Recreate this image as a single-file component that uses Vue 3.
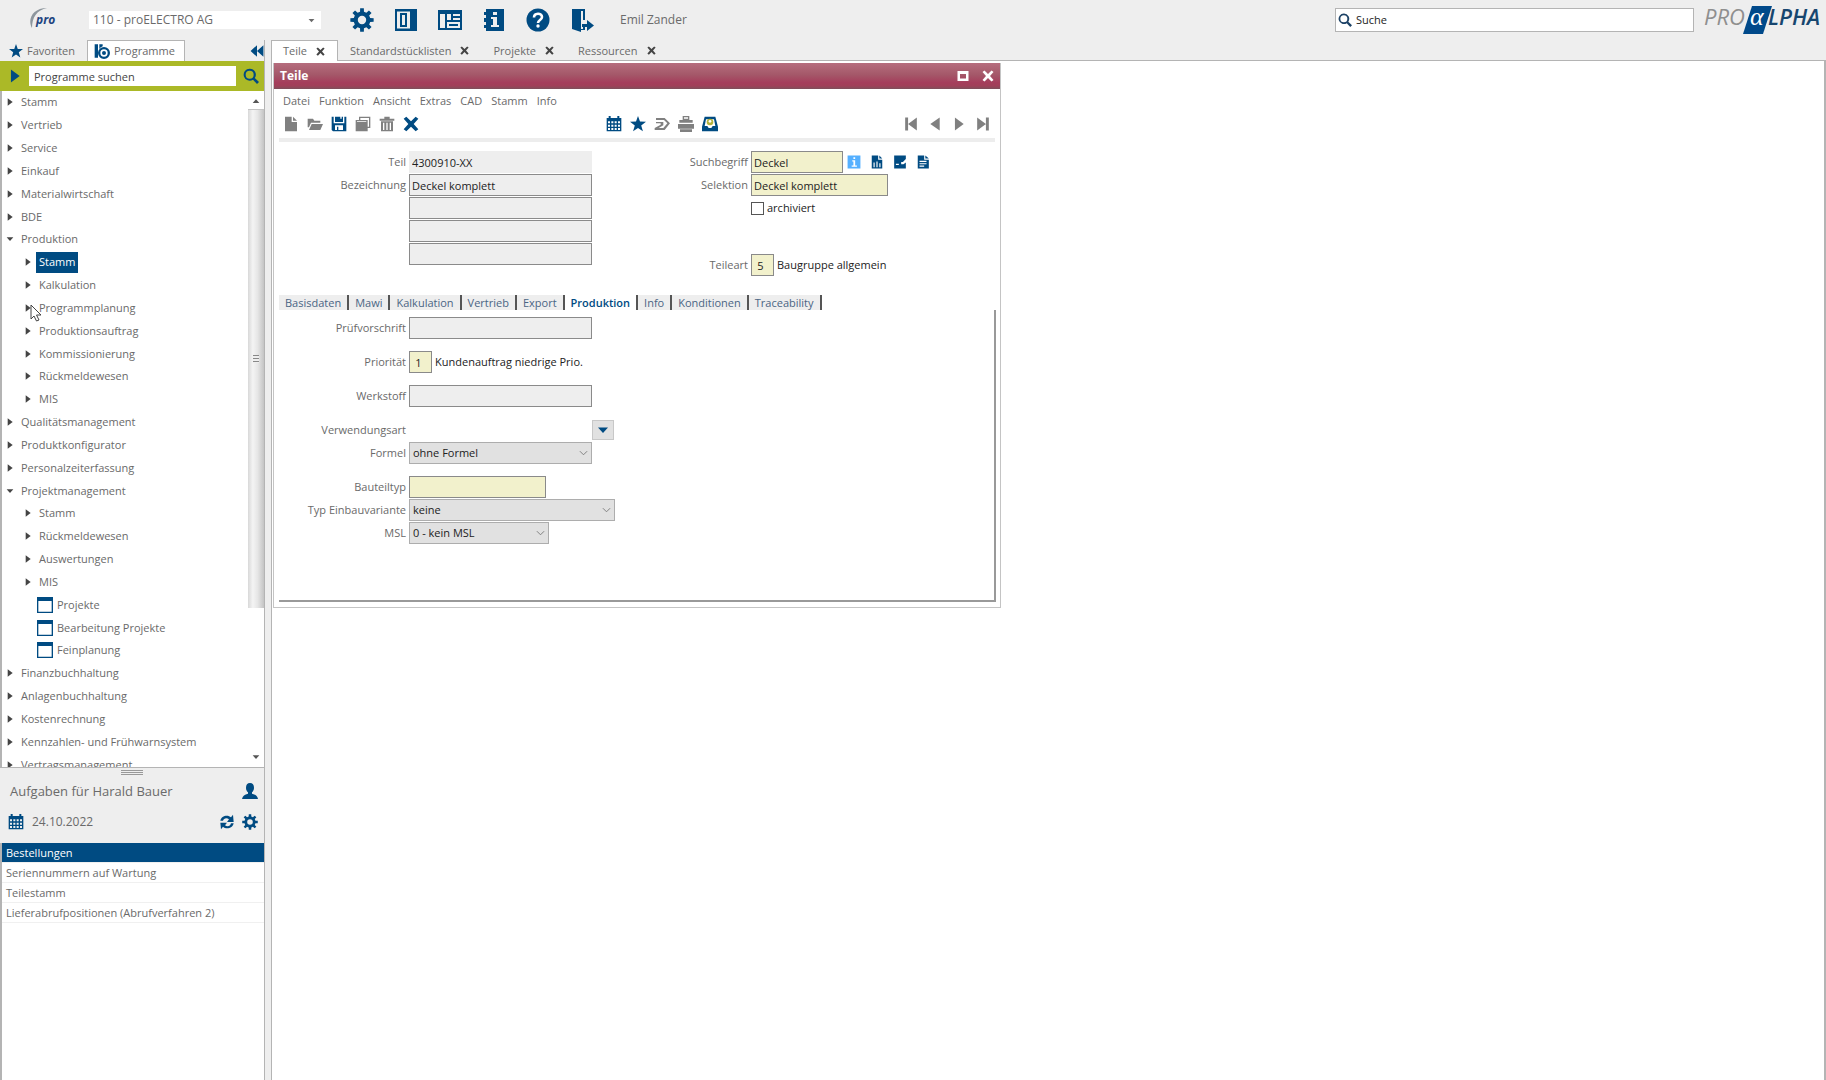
<script setup>
import { ref } from 'vue'

function gearPath(teeth, outer, inner, hole) {
  const points = []
  const step = (Math.PI * 2) / teeth
  for (let i = 0; i < teeth; i++) {
    const a = i * step - Math.PI / 2
    for (const [offset, r] of [[-0.3, inner], [-0.2, outer], [0.2, outer], [0.3, inner]]) {
      const t = a + offset * step
      points.push(`${(12 + r * Math.cos(t)).toFixed(2)} ${(12 + r * Math.sin(t)).toFixed(2)}`)
    }
  }
  return `M${points.join('L')}ZM${12 - hole} 12a${hole} ${hole} 0 1 0 ${hole * 2} 0a${hole} ${hole} 0 1 0 ${-hole * 2} 0Z`
}

const icons = {
  gear: gearPath(8, 11.8, 8.4, 4.2),
  star: 'M12 0l3 8.4 9 .3-7.200 5.500 2.600 8.800L12 17.900 4.600 23l2.600-8.800L0 8.700l9-.3z',
  columns: 'M1 1h22v22H1zM3 3.500v17h13v-17zM6 5h7v14H6zM8 7v10h3V7z',
  board: 'M0 2h24v20H0zM2 6v14h5V6zM9 6v6h4V6zM15 6v2h7V6zM15 10v2h7v-2zM9 14v6h13v-6zM11 16h9v2h-9z',
  notebook: 'M4 1h18v22H4v-3H2v-3h2v-3H2v-4h2V7H2V4h2zM11 4v3h4V4zM9 9v2h2v6H9v2h8v-2h-2V9z',
  door: 'M2 1h13v11h-2V3h-2v18h2v-2h2v3h-4v2L2 21zM17 12l7 5.500-7 5.500v-4h-5v-3h5z',
  search: 'M10 1a9 9 0 1 0 5 16.500L21 24l3-3-6.300-6A9 9 0 0 0 10 1zM10 4a6 6 0 1 1 0 12 6 6 0 0 1 0-12z',
  program: 'M1 2h5v20H1zM8 2h5v3a9 9 0 0 0-5 4zM15 6a9 9 0 1 0 0 18 9 9 0 0 0 0-18zM15 9.500a5.500 5.500 0 1 1 0 11 5.500 5.500 0 0 1 0-11zM15 12a3 3 0 1 0 0 6 3 3 0 0 0 0-6z',
  rewind: 'M12 2v20L1 12zM23 2v20L12 12z',
  right: 'M5 1l15 11L5 23z',
  left: 'M20 1v22L4 12z',
  down: 'M2 7h20L12 18z',
  up: 'M2 18h20L12 7z',
  first: 'M2 1h5v22H2zM7 12L22 1v22z',
  last: 'M17 1h5v22h-5zM17 12L2 1v22z',
  close: 'M1 4l4-3 7 7 7-7 4 3-7 8 7 8-4 3-7-7-7 7-4-3 7-8z',
  file: 'M3 1h10v8h8v14H3zM15 1l6 6h-6z',
  folder: 'M1 4h8l2 3h9v3H6L3 17H1zM7 12h17l-4 9H3z',
  save: 'M1 1h3v10h16V1h3v22H3l-2-2zM6 1h8v3h2V1h2v8H6zM6 14v7h3v-5h2v5h7v-7z',
  copy: 'M6 1h17v17h-4v5H1V6h5zM8 6h11v10h2V3H8zM3 8v1h14V8z',
  trash: 'M8 1h8v3h7v3H1V4h7zM3 8h18v15H3zM6 10v11h2V10zM11 10v11h2V10zM16 10v11h2V10z',
  calendar: 'M1 3h3V0h3v3h10V0h3v3h3v20H1zM3 8v3h3V8zM8 8v3h3V8zM13 8v3h3V8zM18 8v3h3V8zM3 13v3h3v-3zM8 13v3h3v-3zM13 13v3h3v-3zM18 13v3h3v-3zM3 18v3h3v-3zM8 18v3h3v-3zM13 18v3h3v-3zM18 18v3h3v-3z',
  forward: 'M3 3h13l8 8-8 10H1v-3l9-5v-2H3V9h11v5l-7 4h7l6-7-5-5H3z',
  printer: 'M7 0h10v6h5v4H2V6h5zM9 2v2h6V2zM0 12h24v7H0zM3 20h18v4H3z',
  info: 'M1 1h22v22H1zM11 4v3h3V4zM9 9v2h2v7H8v2h9v-2h-3V9z',
  chart: 'M3 1h11v7h7v15H3zM16 1l5 5h-5zM6 13v8h2v-8zM11 11v10h2V11zM16 14v7h2v-7z',
  edit: 'M2 1h20v6l-5 5h-3v4h4l4-3v10H2zM5 15v2h5v-2z',
  doc: 'M3 1h11v7h8v15H3zM16 1l6 5h-6zM6 10v2h12v-2zM6 14v2h12v-2zM6 18v2h8v-2z',
  user: 'M12 0c4 0 6 3 6 7 0 3-1 5-3 7v2c5 1 8 3 9 8H0c1-5 4-7 9-8v-2C7 12 6 10 6 7c0-4 2-7 6-7z',
  refresh: 'M2 10c1-7 11-10 16-5l3-4 1 11H12l3-4c-4-3-8-1-9 2zM22 14c-1 7-11 10-16 5l-3 4-1-10h10l-3 4c4 3 8 1 9-3z',
  windowIcon: 'M0 0h24v24H0zM2 6v16h20V6z',
  maximize: 'M1 2h22v20H1zM6 8v9h12V8z',
}

const appTools = [
  { icon: 'gear', label: 'Einstellungen' },
  { icon: 'columns', label: 'Bereiche' },
  { icon: 'board', label: 'Ansicht' },
  { icon: 'notebook', label: 'Information' },
  { icon: 'help', label: 'Hilfe' },
  { icon: 'door', label: 'Abmelden' },
]

const documents = ['Teile', 'Standardstücklisten', 'Projekte', 'Ressourcen']

const tree = [
  { text: 'Stamm' }, { text: 'Vertrieb' }, { text: 'Service' }, { text: 'Einkauf' },
  { text: 'Materialwirtschaft' }, { text: 'BDE' },
  { text: 'Produktion', open: true },
  { text: 'Stamm', sub: true, selected: true }, { text: 'Kalkulation', sub: true },
  { text: 'Programmplanung', sub: true, pointer: true }, { text: 'Produktionsauftrag', sub: true },
  { text: 'Kommissionierung', sub: true }, { text: 'Rückmeldewesen', sub: true }, { text: 'MIS', sub: true },
  { text: 'Qualitätsmanagement' }, { text: 'Produktkonfigurator' }, { text: 'Personalzeiterfassung' },
  { text: 'Projektmanagement', open: true },
  { text: 'Stamm', sub: true }, { text: 'Rückmeldewesen', sub: true },
  { text: 'Auswertungen', sub: true }, { text: 'MIS', sub: true },
  { text: 'Projekte', sub: true, leaf: true }, { text: 'Bearbeitung Projekte', sub: true, leaf: true },
  { text: 'Feinplanung', sub: true, leaf: true },
  { text: 'Finanzbuchhaltung' }, { text: 'Anlagenbuchhaltung' }, { text: 'Kostenrechnung' },
  { text: 'Kennzahlen- und Frühwarnsystem' }, { text: 'Vertragsmanagement' },
]

const tasks = ['Bestellungen', 'Seriennummern auf Wartung', 'Teilestamm', 'Lieferabrufpositionen (Abrufverfahren 2)']
const activeTask = ref(0)

const menus = ['Datei', 'Funktion', 'Ansicht', 'Extras', 'CAD', 'Stamm', 'Info']
const editTools = [
  { icon: 'file', label: 'Neu' },
  { icon: 'folder', label: 'Öffnen' },
  { icon: 'save', label: 'Speichern', active: true },
  { icon: 'copy', label: 'Kopieren' },
  { icon: 'trash', label: 'Löschen' },
  { icon: 'close', label: 'Abbrechen', active: true },
]
const viewTools = [
  { icon: 'calendar', label: 'Kalender', active: true },
  { icon: 'star', label: 'Favorit', active: true },
  { icon: 'forward', label: 'Weiterleiten' },
  { icon: 'printer', label: 'Drucken' },
  { icon: 'inbox', label: 'Ablage', active: true },
]
const navTools = [
  { icon: 'first', label: 'Erster Satz' },
  { icon: 'left', label: 'Vorheriger Satz' },
  { icon: 'right', label: 'Nächster Satz' },
  { icon: 'last', label: 'Letzter Satz' },
]
const partTools = [
  { icon: 'info', label: 'Info', light: true },
  { icon: 'chart', label: 'Auswertung' },
  { icon: 'edit', label: 'Bearbeiten' },
  { icon: 'doc', label: 'Dokument' },
]

const sections = ['Basisdaten', 'Mawi', 'Kalkulation', 'Vertrieb', 'Export', 'Produktion', 'Info', 'Konditionen', 'Traceability']
const activeSection = ref('Produktion')
</script>

<template>
  <div class="app">
    <header class="topbar">
      <svg class="pro-logo" viewBox="0 0 34 28" aria-label="pro">
        <path d="M4 22C-1 13 5 2 19 2 9 4 4 11 4 22z" fill="#8d969d" />
        <text x="8" y="18" class="pro-text">pro</text>
      </svg>
      <div class="pick client">
        <select aria-label="Mandant"><option>110 - proELECTRO AG</option></select>
        <svg class="client-arrow" viewBox="0 0 24 24"><path :d="icons.down" /></svg>
      </div>
      <nav class="app-tools">
        <button v-for="tool in appTools" :key="tool.icon" type="button" :aria-label="tool.label">
          <svg v-if="tool.icon === 'help'" viewBox="0 0 24 24">
            <circle cx="12" cy="12" r="11.500" />
            <path d="M8 9.500c0-5 8-5 8-.5 0 3-4 3-4 6" fill="none" stroke="#fff" stroke-width="2.600" />
            <circle cx="12" cy="18" r="1.700" fill="#fff" />
          </svg>
          <svg v-else viewBox="0 0 24 24"><path :d="icons[tool.icon]" /></svg>
        </button>
      </nav>
      <span class="user-name">Emil Zander</span>
      <label class="global-search">
        <svg viewBox="0 0 24 24"><path :d="icons.search" /></svg>
        <input type="text" value="Suche" aria-label="Suche" />
      </label>
      <svg class="brand" viewBox="0 0 120 30" aria-label="PROALPHA">
        <text x="1" y="20" class="brand-pro">PRO</text>
        <path d="M49 1h20l-9 28H40z" fill="#00498a" />
        <text x="47" y="20" class="brand-alpha">α</text>
        <text x="65" y="20" class="brand-lpha">LPHA</text>
      </svg>
    </header>

    <div class="body">
      <aside class="sidebar">
        <div class="side-tabs">
          <button type="button" class="side-tab">
            <svg class="i14" viewBox="0 0 24 24"><path :d="icons.star" /></svg>Favoriten
          </button>
          <button type="button" class="side-tab current">
            <svg class="i16" viewBox="0 0 24 24"><path :d="icons.program" /></svg>Programme
          </button>
          <button type="button" class="collapse" aria-label="Einklappen">
            <svg class="i14" viewBox="0 0 24 24"><path :d="icons.rewind" /></svg>
          </button>
        </div>
        <div class="finder">
          <button type="button" aria-label="Starten"><svg class="i14" viewBox="0 0 24 24"><path :d="icons.right" /></svg></button>
          <input type="text" value="Programme suchen" aria-label="Programme suchen" />
          <button type="button" aria-label="Suchen"><svg class="i16" viewBox="0 0 24 24"><path :d="icons.search" /></svg></button>
        </div>
        <div class="tree-frame">
          <ul class="tree">
            <li v-for="(node, n) in tree" :key="n" :class="{ sub: node.sub }">
              <svg v-if="node.leaf" class="i16 leaf" viewBox="0 0 24 24"><path :d="icons.windowIcon" /></svg>
              <svg v-else class="twisty" viewBox="0 0 24 24"><path :d="node.open ? icons.down : icons.right" /></svg>
              <button type="button" :class="{ selected: node.selected }">{{ node.text }}</button>
              <svg v-if="node.pointer" class="pointer" viewBox="0 0 12 18">
                <path d="M1 1v14l3-3 2.500 5 2.500-1-2.500-5H11z" fill="#fff" stroke="#444" />
              </svg>
            </li>
          </ul>
          <div class="scrollbar">
            <svg viewBox="0 0 24 24"><path :d="icons.up" /></svg>
            <div class="thumb"><i></i></div>
            <svg viewBox="0 0 24 24"><path :d="icons.down" /></svg>
          </div>
        </div>
        <div class="grip"><i></i></div>
        <section class="tasks">
          <div class="task-head">
            <h2>Aufgaben für Harald Bauer</h2>
            <button type="button" aria-label="Benutzer"><svg class="i16" viewBox="0 0 24 24"><path :d="icons.user" /></svg></button>
          </div>
          <div class="task-date">
            <svg class="i16" viewBox="0 0 24 24"><path :d="icons.calendar" /></svg>
            <time datetime="2022-10-24">24.10.2022</time>
            <button type="button" aria-label="Aktualisieren"><svg class="i16" viewBox="0 0 24 24"><path :d="icons.refresh" /></svg></button>
            <button type="button" aria-label="Einstellungen"><svg class="i16" viewBox="0 0 24 24"><path :d="icons.gear" /></svg></button>
          </div>
          <ul class="task-list">
            <li v-for="(task, t) in tasks" :key="task">
              <button type="button" :class="{ selected: t === activeTask }" @click="activeTask = t">{{ task }}</button>
            </li>
          </ul>
        </section>
      </aside>

      <main class="main">
        <div class="doc-tabs">
          <div v-for="(doc, d) in documents" :key="doc" class="doc-tab" :class="{ current: d === 0 }">
            <button type="button">{{ doc }}</button>
            <button type="button" :aria-label="doc + ' schließen'"><svg class="i10" viewBox="0 0 24 24"><path :d="icons.close" /></svg></button>
          </div>
        </div>

        <div class="desk">
          <section class="window">
            <div class="title">
              <h1>Teile</h1>
              <button type="button" aria-label="Maximieren"><svg class="i12" viewBox="0 0 24 24"><path :d="icons.maximize" /></svg></button>
              <button type="button" aria-label="Schließen"><svg class="i12" viewBox="0 0 24 24"><path :d="icons.close" /></svg></button>
            </div>
            <nav class="menu">
              <button v-for="menu in menus" :key="menu" type="button">{{ menu }}</button>
            </nav>
            <div class="toolbar">
              <div class="tool-group">
                <button v-for="tool in editTools" :key="tool.icon" type="button" :class="{ active: tool.active }" :aria-label="tool.label">
                  <svg class="i16" viewBox="0 0 24 24"><path :d="icons[tool.icon]" /></svg>
                </button>
              </div>
              <div class="tool-group view">
                <button v-for="tool in viewTools" :key="tool.icon" type="button" :class="{ active: tool.active }" :aria-label="tool.label">
                  <svg v-if="tool.icon === 'inbox'" class="i16" viewBox="0 0 24 24">
                    <path d="M4 1h16l4 15v7H0v-7zM6 5L4 15h4l2 3h4l2-3h4L18 5z" />
                    <circle cx="12" cy="9" r="5" fill="#b5b23c" />
                    <circle cx="12" cy="8" r="2" fill="#fff" />
                  </svg>
                  <svg v-else class="i16" viewBox="0 0 24 24"><path :d="icons[tool.icon]" /></svg>
                </button>
              </div>
              <div class="tool-group">
                <button v-for="tool in navTools" :key="tool.icon" type="button" :aria-label="tool.label">
                  <svg class="i14" viewBox="0 0 24 24"><path :d="icons[tool.icon]" /></svg>
                </button>
              </div>
            </div>

            <form class="head-form" @submit.prevent>
              <div class="fields">
                <div class="row"><label for="part">Teil</label><input id="part" class="wide flat" type="text" value="4300910-XX" readonly /></div>
                <div class="row"><label for="name">Bezeichnung</label><input id="name" class="wide" type="text" value="Deckel komplett" readonly /></div>
                <div v-for="n in 3" :key="n" class="row"><span class="no-label"></span><input class="wide" type="text" :aria-label="'Bezeichnung Zeile ' + (n + 1)" readonly /></div>
              </div>
              <div class="fields side">
                <div class="row">
                  <label for="term">Suchbegriff</label><input id="term" class="short key" type="text" value="Deckel" />
                  <div class="part-tools">
                    <button v-for="tool in partTools" :key="tool.icon" type="button" :class="{ light: tool.light }" :aria-label="tool.label">
                      <svg class="i14" viewBox="0 0 24 24"><path :d="icons[tool.icon]" /></svg>
                    </button>
                  </div>
                </div>
                <div class="row"><label for="selection">Selektion</label><input id="selection" class="medium key" type="text" value="Deckel komplett" /></div>
                <div class="row"><span class="no-label"></span><input id="archived" type="checkbox" /><label for="archived" class="check-label">archiviert</label></div>
                <div class="row far"><label for="kind">Teileart</label><input id="kind" class="tiny key" type="text" value="5" /><span class="hint">Baugruppe allgemein</span></div>
              </div>
            </form>

            <div class="section-tabs">
              <button v-for="section in sections" :key="section" type="button" :class="{ current: section === activeSection }" @click="activeSection = section">
                {{ section }}
              </button>
            </div>
            <form class="section-page fields" @submit.prevent>
              <div class="row"><label for="test">Prüfvorschrift</label><input id="test" class="wide" type="text" readonly /></div>
              <div class="row apart"><label for="priority">Priorität</label><input id="priority" class="tiny key" type="text" value="1" /><span class="hint">Kundenauftrag niedrige Prio.</span></div>
              <div class="row apart"><label for="material">Werkstoff</label><input id="material" class="wide" type="text" readonly /></div>
              <div class="row apart">
                <label for="usage">Verwendungsart</label><input id="usage" class="wide bare" type="text" />
                <button type="button" class="drop" aria-label="Verwendungsart wählen"><svg class="i12" viewBox="0 0 24 24"><path :d="icons.down" /></svg></button>
              </div>
              <div class="row">
                <label for="formula">Formel</label>
                <div class="pick wide"><select id="formula"><option>ohne Formel</option></select><svg class="chevron" viewBox="0 0 10 6"><path d="M1 1l4 4 4-4" /></svg></div>
              </div>
              <div class="row apart"><label for="component">Bauteiltyp</label><input id="component" class="medium key" type="text" /></div>
              <div class="row">
                <label for="mount">Typ Einbauvariante</label>
                <div class="pick widest"><select id="mount"><option>keine</option></select><svg class="chevron" viewBox="0 0 10 6"><path d="M1 1l4 4 4-4" /></svg></div>
              </div>
              <div class="row">
                <label for="msl">MSL</label>
                <div class="pick level"><select id="msl"><option>0 - kein MSL</option></select><svg class="chevron" viewBox="0 0 10 6"><path d="M1 1l4 4 4-4" /></svg></div>
              </div>
            </form>
          </section>
        </div>
      </main>
    </div>
  </div>
</template>

<style>
body {
  margin: 0;
  background: #eeeeee;
}
</style>

<style scoped>
* {
  box-sizing: border-box;
}

.app {
  --blue: #004b82;
  --grey: #6a6a6a;
  --line: #b4b4b4;
  display: flex;
  flex-direction: column;
  min-height: 100vh;
  background: #eeeeee;
  color: var(--grey);
  font: 11px/16px "Open Sans", "Noto Sans", sans-serif;
}

button,
input,
select {
  margin: 0;
  padding: 0;
  border: 0;
  border-radius: 0;
  background: none;
  color: inherit;
  font: inherit;
}

button {
  display: flex;
  align-items: center;
  white-space: nowrap;
}

ul {
  margin: 0;
  padding: 0;
  list-style: none;
}

h1,
h2 {
  margin: 0;
}

svg {
  display: block;
  flex: none;
  fill: currentColor;
  fill-rule: evenodd;
}

.i10 { width: 9px; height: 9px; }
.i12 { width: 12px; height: 12px; }
.i14 { width: 14px; height: 14px; }
.i16 { width: 16px; height: 16px; }

/* top bar */
.topbar {
  display: flex;
  align-items: center;
  height: 40px;
  padding: 0 3px 0 28px;
}

.pro-logo {
  width: 34px;
  height: 28px;
}

.pro-text {
  fill: #1f4480;
  font: italic bold 12px "Open Sans", sans-serif;
}

.pick {
  position: relative;
  display: flex;
}

.pick select {
  width: 100%;
  appearance: none;
}

.pick svg {
  position: absolute;
  top: 0;
  bottom: 0;
  margin: auto 0;
  pointer-events: none;
}

.client {
  width: 232px;
  margin: 0 29px 0 27px;
}

.client select {
  height: 18px;
  padding-left: 4px;
  background: #fff;
  font-size: 12px;
}

.client-arrow {
  right: 6px;
  width: 7px;
  height: 7px;
}

.app-tools {
  display: flex;
  gap: 20px;
  color: var(--blue);
}

.app-tools svg {
  width: 24px;
  height: 24px;
}

.user-name {
  margin-left: 26px;
  font-size: 12px;
}

.global-search {
  display: flex;
  align-items: center;
  gap: 4px;
  width: 359px;
  height: 24px;
  margin: 0 9px 0 auto;
  padding-left: 2px;
  border: 1px solid var(--line);
  background: #fff;
}

.global-search svg {
  width: 14px;
  height: 14px;
  color: #1d4266;
}

.global-search input {
  flex: 1;
  outline: 0;
  color: #222;
}

.brand {
  width: 120px;
  height: 30px;
}

.brand-pro,
.brand-lpha {
  font: italic 22px "Open Sans", sans-serif;
}

.brand-pro { fill: #8f8f8f; }

.brand-lpha {
  fill: #17466f;
  font-weight: 600;
}

.brand-alpha {
  fill: #fff;
  font: italic 26px "Liberation Serif", serif;
}

/* layout */
.body {
  display: flex;
  flex: 1;
}

.sidebar {
  display: flex;
  flex-direction: column;
  flex: none;
  width: 265px;
  border-right: 1px solid var(--line);
}

/* sidebar */
.side-tabs {
  display: flex;
  height: 21px;
  padding-left: 2px;
}

.side-tab {
  gap: 4px;
  width: 85px;
  padding-left: 7px;
}

.side-tab svg,
.collapse,
.finder button {
  color: var(--blue);
}

.side-tab.current {
  gap: 4px;
  width: 98px;
  padding-left: 6px;
  border: 1px solid var(--line);
  border-bottom: 0;
  background: #fff;
}

.collapse {
  margin-left: auto;
}

.finder {
  display: flex;
  align-items: center;
  gap: 7px;
  height: 30px;
  padding: 0 5px 0 8px;
  background: #abb927;
}

.finder input {
  flex: 1;
  min-width: 0;
  height: 20px;
  padding-left: 5px;
  background: #fff;
  color: #444;
}

.tree-frame {
  display: flex;
  height: 677px;
  overflow: hidden;
  border: solid var(--line);
  border-width: 0 0 1px 2px;
  background: #fff;
}

.tree {
  display: grid;
  flex: 1;
  grid-auto-rows: 1fr;
  height: 685px;
}

.tree li {
  position: relative;
  display: flex;
  align-items: center;
  padding-left: 4px;
}

.tree li.sub {
  padding-left: 22px;
}

.twisty {
  width: 8px;
  height: 8px;
  color: #444;
}

.leaf {
  margin-left: 13px;
  color: var(--blue);
}

.tree button {
  height: 21px;
  margin-left: 4px;
  padding: 0 3px;
}

.tree .leaf + button {
  margin-left: 1px;
}

.tree .selected {
  background: var(--blue);
  color: #fff;
}

.pointer {
  position: absolute;
  top: 7px;
  left: 28px;
  width: 12px;
  height: 18px;
}

.scrollbar {
  display: flex;
  flex-direction: column;
  align-items: center;
  width: 16px;
  padding: 6px 0;
}

.scrollbar svg {
  width: 8px;
  height: 8px;
  color: #555;
}

.thumb {
  display: flex;
  align-items: center;
  justify-content: center;
  width: 16px;
  height: 499px;
  margin: 4px 0 auto;
  border-top: 1px solid #c4c4c4;
  background: linear-gradient(90deg, #d8d8d8, #f4f4f4 30%, #e6e6e6 60%, #c4c4c4);
}

.thumb i {
  width: 6px;
  height: 8px;
  background: repeating-linear-gradient(#888 0 1px, #eee 1px 3px);
}

.grip {
  display: flex;
  justify-content: center;
  height: 7px;
  padding-top: 2px;
}

.grip i {
  width: 22px;
  height: 5px;
  background: repeating-linear-gradient(#999 0 1px, #eee 1px 2px);
}

.tasks {
  display: flex;
  flex: 1;
  flex-direction: column;
}

.task-head,
.task-date {
  display: flex;
  align-items: center;
  height: 32px;
  padding: 0 6px 0 10px;
}

.task-head h2 {
  flex: 1;
  font-size: 13px;
  font-weight: 400;
}

.task-date {
  gap: 7px;
  height: 36px;
  padding-left: 8px;
  padding-bottom: 6px;
  font-size: 12px;
}

.tasks svg {
  color: var(--blue);
}

.task-date time {
  flex: 1;
  padding-left: 1px;
}

.task-list {
  flex: 1;
  border: solid var(--line);
  border-width: 0 0 0 2px;
  background: #fff;
}

.task-list button {
  width: 100%;
  height: 20px;
  padding-left: 4px;
  border-bottom: 1px solid #f0f0f0;
}

.task-list .selected {
  background: var(--blue);
  color: #fff;
}

/* open documents */
.main {
  display: flex;
  flex: 1;
  flex-direction: column;
  min-width: 0;
  margin-left: 6px;
}

.doc-tabs {
  display: flex;
  height: 21px;
  border-bottom: 1px solid var(--line);
}

.doc-tab {
  display: flex;
  gap: 9px;
  padding: 1px 12px 0;
}

.doc-tab.current {
  height: 21px;
  padding: 0 12px 0 11px;
  border: 1px solid var(--line);
  border-bottom: 0;
  background: #fff;
}

.doc-tab svg {
  color: #444;
}

.desk {
  flex: 1;
  padding: 2px 0 0 1px;
  border: solid var(--line);
  border-width: 0 2px 0 1px;
  background: #fff;
}

/* part window */
.window {
  max-width: 728px;
  padding-bottom: 5px;
  border: 1px solid #c4c4c4;
  border-top: 0;
  background: #fff;
}

.title {
  display: flex;
  align-items: center;
  gap: 13px;
  height: 26px;
  padding: 0 6px;
  background: linear-gradient(#b66d7e, #a45869 45%, #a53e5c 75%, #a04059 88%, #7d4f5b);
  color: #fff;
}

.title h1 {
  flex: 1;
  font-size: 12px;
  font-weight: 700;
}

.menu {
  display: flex;
  gap: 9px;
  height: 23px;
  padding-left: 9px;
}

.toolbar {
  display: flex;
  align-items: center;
  height: 30px;
  margin: 0 5px;
  padding: 0 5px 2px 4px;
  border-bottom: 4px solid #ededed;
  color: #808080;
}

.tool-group {
  display: flex;
  gap: 8px;
}

.tool-group:last-child {
  gap: 10px;
  margin-left: auto;
}

.tool-group.view {
  margin-left: 187px;
}

.tool-group .active,
.part-tools {
  color: var(--blue);
}

/* forms */
.head-form {
  display: flex;
  height: 153px;
  padding-top: 9px;
}

.fields {
  display: flex;
  flex-direction: column;
  gap: 1px;
}

.row {
  display: flex;
  align-items: center;
  height: 22px;
}

.row.apart { margin-top: 11px; }
.row.far { margin-top: 34px; }

.row > label:first-child,
.no-label {
  width: 135px;
  padding-right: 3px;
  text-align: right;
  white-space: nowrap;
}

.side {
  margin-left: 24px;
}

.row input[type="text"] {
  height: 22px;
  padding-left: 2px;
  border: 1px solid #8a8a8a;
  background: #eeeeee;
  color: #222;
}

.row input.key { background: #f2f1cc; }
.row input.flat { border-color: #eeeeee; }

.row input.bare {
  border-color: #fff;
  background: #fff;
}

.wide { width: 183px; }
.widest { width: 206px; }
.medium { width: 137px; }
.level { width: 140px; }
.short { width: 92px; }

.row input.tiny {
  width: 23px;
  padding: 0 4px 0 0;
  text-align: center;
}

.row input[type="checkbox"] {
  width: 13px;
  height: 13px;
  border: 1px solid #555;
  background: #fff;
  appearance: none;
}

.check-label,
.hint {
  padding-left: 3px;
  color: #222;
  white-space: nowrap;
}

.part-tools {
  display: flex;
  gap: 9px;
  padding-left: 4px;
}

.part-tools .light { color: #55b0ff; }

.row .pick select {
  height: 22px;
  padding-left: 3px;
  border: 1px solid #adadad;
  background: #e1e1e1;
  color: #222;
}

.chevron {
  right: 4px;
  width: 9px;
  height: 6px;
  fill: none;
  stroke: #777;
}

.drop {
  justify-content: center;
  width: 22px;
  height: 20px;
  border: 1px solid #c8c8c8;
  background: #e1e1e1;
  color: var(--blue);
}

.section-tabs {
  display: flex;
  height: 15px;
  margin-left: 5px;
}

.section-tabs button {
  padding: 0 6px;
  border-right: 2px solid #555;
  background: #eeeeee;
  color: #4b6584;
}

.section-tabs .current {
  background: #fff;
  color: var(--blue);
  font-weight: 600;
}

.section-page {
  height: 292px;
  margin: 0 4px 0 5px;
  padding-top: 7px;
  border: solid #999;
  border-width: 0 2px 2px 0;
}

.section-page .row > label:first-child {
  width: 130px;
}
</style>
